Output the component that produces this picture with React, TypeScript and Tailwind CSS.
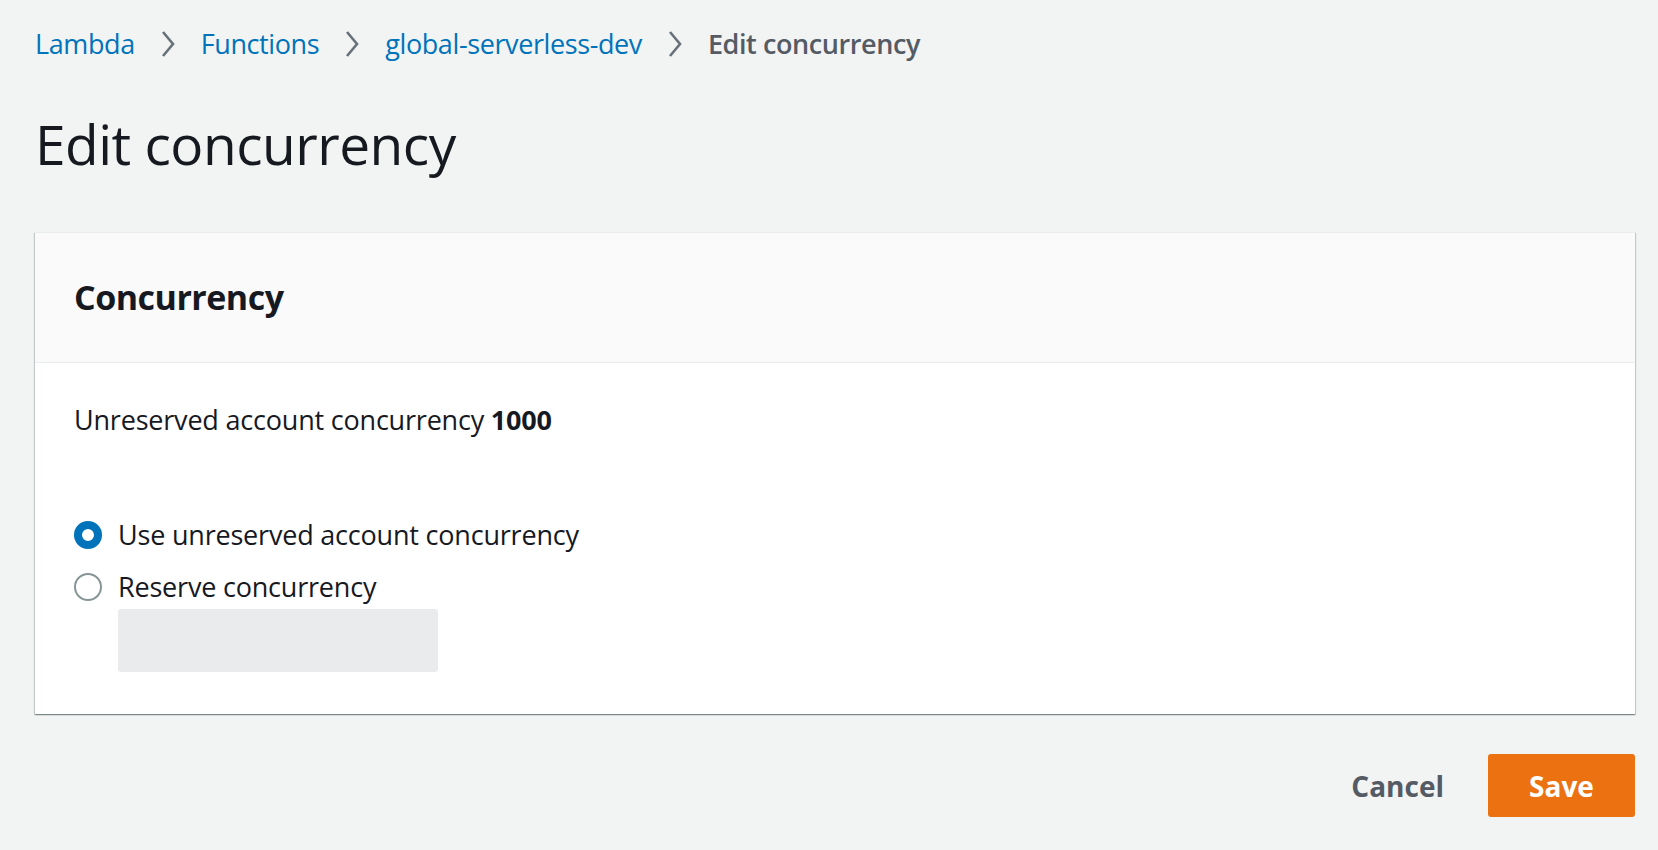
import React, { useState } from 'react';

const font = { fontFamily: '"Open Sans", "Liberation Sans", sans-serif' };

function Chevron() {
    return (
        <svg width="20" height="30" viewBox="0 0 20 30" className="mx-[23px]">
            <path d="M5 3 L15 15 L5 27" fill="none" stroke="#687078" strokeWidth="2.6" />
        </svg>
    );
}

export default function App() {
    const [mode, setMode] = useState<'unreserved' | 'reserve'>('unreserved');
    return (
        <div className="min-h-[850px] w-[1658px] bg-[#f2f3f3] text-[#16191f] pl-[35px] pr-[23px] pt-[26px]" style={font}>
            <nav className="flex items-center h-[36px] text-[27px] tracking-[-0.4px]">
                <a className="text-[#0073bb]">Lambda</a>
                <Chevron />
                <a className="text-[#0073bb]">Functions</a>
                <Chevron />
                <a className="text-[#0073bb]">global-serverless-dev</a>
                <Chevron />
                <span className="text-[#545b64] font-semibold">Edit concurrency</span>
            </nav>
            <h1 className="mt-[50px] text-[55px] leading-[64px] tracking-[-0.5px]">Edit concurrency</h1>
            <div className="mt-[56px] bg-white shadow-[0_1px_1px_0_rgba(0,28,36,0.3),1px_1px_1px_0_rgba(0,28,36,0.15),-1px_1px_1px_0_rgba(0,28,36,0.15)] border-t border-[#eaeded]">
                <div className="h-[130px] bg-[#fafafa] border-b border-[#eaeded] flex items-center px-[39px]">
                    <h2 className="text-[34px] font-bold tracking-[-0.5px]">Concurrency</h2>
                </div>
                <div className="px-[39px] pt-[38px] pb-[42px] text-[27px] tracking-[-0.2px]">
                    <p className="leading-[38px]">
                        Unreserved account concurrency <span className="font-bold">1000</span>
                    </p>
                    <div className="mt-[78px] flex flex-col gap-[16px]">
                        <label className="flex items-center gap-[16px] leading-[36px] cursor-pointer" onClick={() => setMode('unreserved')}>
                            {mode === 'unreserved' ? (
                                <span className="w-[28px] h-[28px] rounded-full border-[8px] border-[#0073bb] bg-white" />
                            ) : (
                                <span className="w-[28px] h-[28px] rounded-full border-2 border-[#879596] bg-white" />
                            )}
                            Use unreserved account concurrency
                        </label>
                        <label className="flex items-center gap-[16px] leading-[36px] cursor-pointer" onClick={() => setMode('reserve')}>
                            {mode === 'reserve' ? (
                                <span className="w-[28px] h-[28px] rounded-full border-[8px] border-[#0073bb] bg-white" />
                            ) : (
                                <span className="w-[28px] h-[28px] rounded-full border-2 border-[#879596] bg-white" />
                            )}
                            Reserve concurrency
                        </label>
                    </div>
                    <div className="ml-[44px] mt-[4px] w-[320px] h-[63px] rounded-[3px] bg-[#e9ebed]" />
                </div>
            </div>
            <div className="mt-[40px] flex justify-end items-center gap-[44px]">
                <button className="text-[28px] font-bold text-[#545b64]">Cancel</button>
                <button className="w-[147px] h-[63px] rounded-[3px] bg-[#ec7211] text-white text-[28px] font-bold">Save</button>
            </div>
        </div>
    );
}
